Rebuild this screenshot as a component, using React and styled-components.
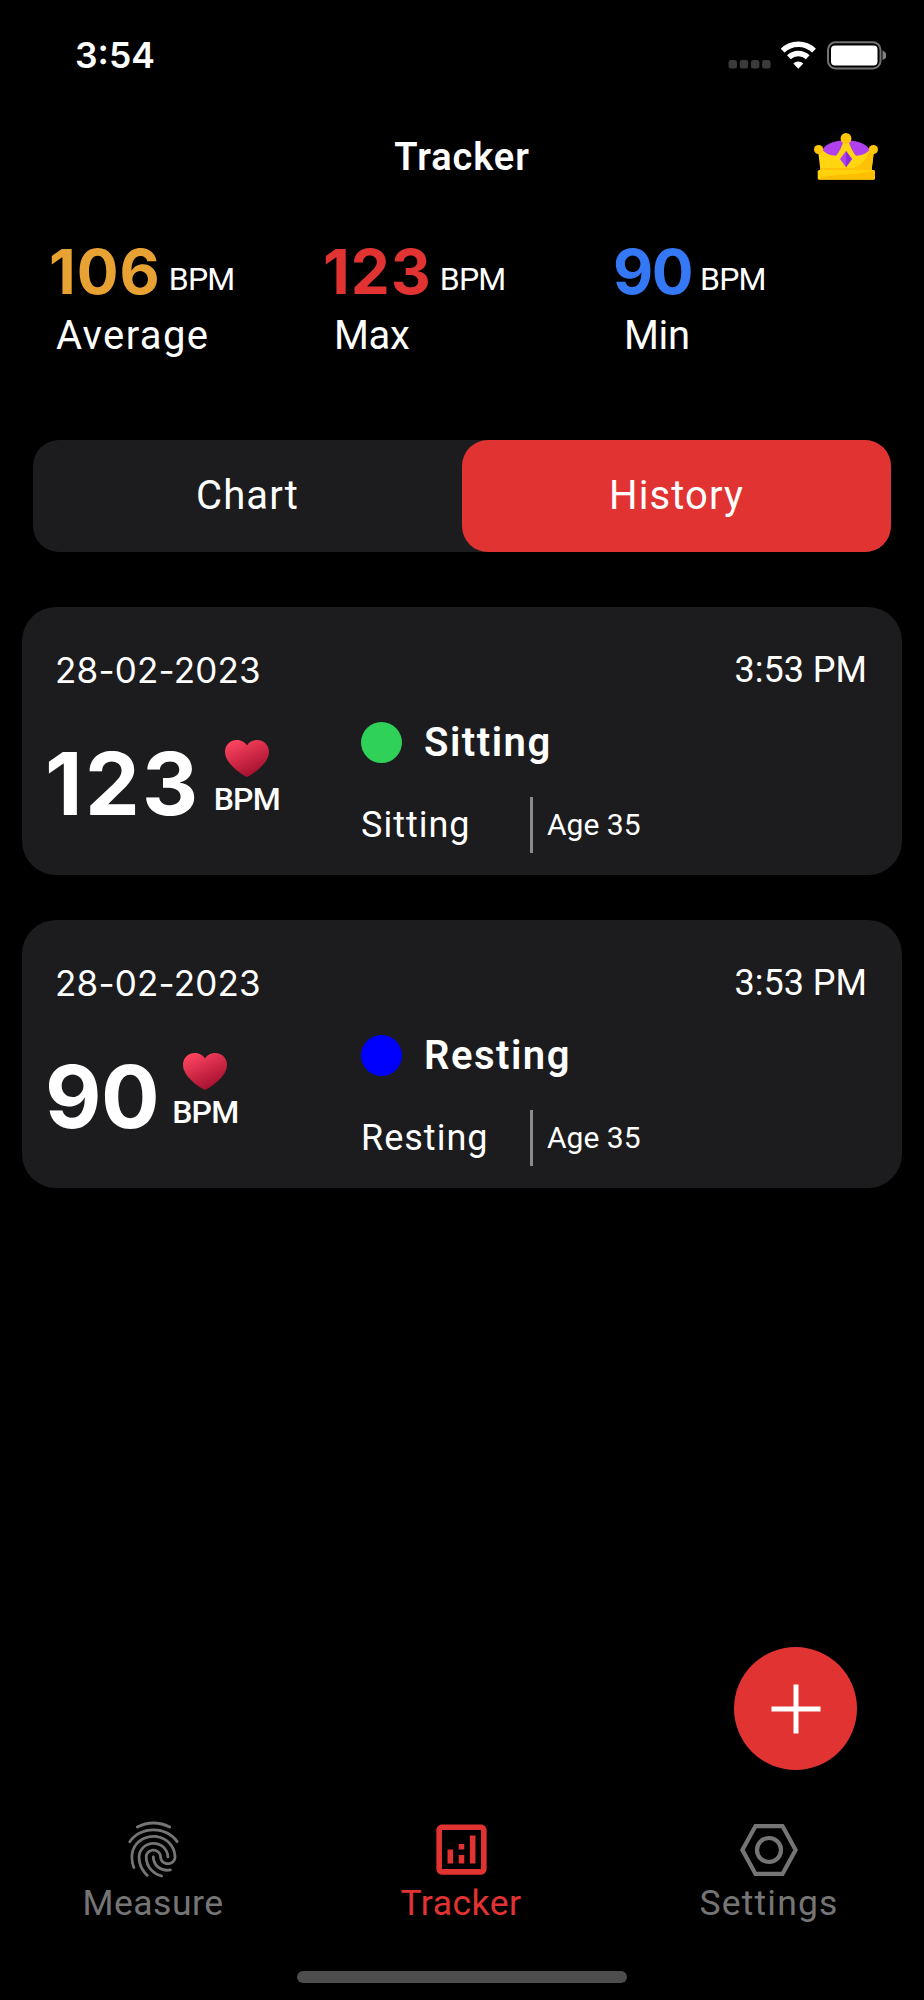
import React, { useState } from 'react'
import styled, { createGlobalStyle } from 'styled-components'
import { MdFingerprint, MdOutlineAnalytics } from 'react-icons/md'

const colors = {
    red: '#e23333',
    orange: '#e8a233',
    blue: '#3478f6',
    card: '#1c1c1e',
    muted: '#757575',
}

const GlobalStyle = createGlobalStyle`
    * {
        box-sizing: border-box;
    }
    body {
        margin: 0;
        background: #000;
        color: #fff;
        font-family: Roboto, 'Liberation Sans', sans-serif;
    }
    button {
        border: none;
        padding: 0;
        background: none;
        color: inherit;
        font-family: inherit;
        cursor: pointer;
    }
`
const Screen = styled.div`
    position: relative;
    display: flex;
    flex-direction: column;
    width: 924px;
    height: 2000px;
    overflow: hidden;
`
const Text = styled.span`
    display: block;
    font-size: ${p => p.$size}px;
    font-weight: ${p => p.$weight || 400};
    letter-spacing: ${p => p.$track || 0}px;
    line-height: ${p => p.$line || 48}px;
    color: ${p => p.$color || 'inherit'};
    white-space: nowrap;
`
// numerals with wide round shapes
const Digits = styled(Text)`
    font-family: Inter, sans-serif;
`
const StatusBar = styled.div`
    display: flex;
    align-items: center;
    justify-content: space-between;
    height: 111px;
    padding: 0 38px 0 75px;
`
const Header = styled.header`
    display: grid;
    grid-template-columns: 1fr auto 1fr;
    align-items: center;
    height: 91px;
    padding: 0 46px;
`
const CrownButton = styled.button`
    grid-column: 3;
    justify-self: end;
    height: 47px;
`
const Title = styled(Text)`
    grid-column: 2;
`
const Stats = styled.section`
    display: grid;
    grid-template-columns: 274px 290px 1fr;
    margin-top: 37px;
    padding-left: 49px;
`
const StatValue = styled.div`
    display: flex;
    gap: 8px;
    height: 66px;
`
const StatUnit = styled(Text)`
    padding-top: 15px;
`
const StatLabel = styled(Text)`
    margin-top: 7px;
    padding-left: ${p => p.$indent}px;
`
const Tabs = styled.div`
    display: grid;
    grid-template-columns: 1fr 1fr;
    height: 112px;
    margin: 80px 33px 0;
    border-radius: 26px;
    background: ${colors.card};
`
const Tab = styled.button`
    border-radius: 26px;
    background: ${p => (p.$active ? colors.red : 'transparent')};
`
const List = styled.main`
    display: flex;
    flex-direction: column;
    gap: 45px;
    margin-top: 55px;
    padding: 0 22px;
`
const Card = styled.article`
    height: 268px;
    padding-top: 39px;
    border-radius: 34px;
    background: ${colors.card};
`
const CardTop = styled.div`
    display: flex;
    justify-content: space-between;
    padding: 0 35px 0 33px;
`
const CardBody = styled.div`
    display: grid;
    grid-template-columns: 315px 1fr;
    padding-left: 23px;
`
const Reading = styled.div`
    display: flex;
    gap: 13px;
    padding-top: 45px;
`
const Unit = styled.div`
    display: flex;
    flex-direction: column;
    align-items: center;
    padding-top: 1px;
`
const Details = styled.div`
    padding: 24px 0 0 1px;
`
const Status = styled.div`
    display: flex;
    align-items: center;
    gap: 22px;
    margin-top: -1px;
`
const Dot = styled.i`
    width: 41px;
    height: 41px;
    border-radius: 50%;
    background: ${p => p.$color};
`
const StatusName = styled(Text)`
    padding-top: 2px;
`
const Meta = styled.div`
    display: grid;
    grid-template-columns: 169px 1fr;
    align-items: center;
    height: 56px;
    margin-top: 30px;
`
const Age = styled.div`
    display: flex;
    align-items: center;
    height: 56px;
    padding-left: 14px;
    border-left: 3px solid #8a8a8b;
`
const AddButton = styled.button`
    position: absolute;
    right: 67px;
    bottom: 230px;
    display: flex;
    align-items: center;
    justify-content: center;
    width: 123px;
    height: 123px;
    border-radius: 50%;
    background: ${colors.red};
`
const TabBar = styled.nav`
    display: grid;
    grid-template-columns: repeat(3, 308px);
    margin: auto 0 0 -1px;
`
const TabItem = styled.button`
    display: flex;
    flex-direction: column;
    align-items: center;
    color: ${p => (p.$active ? colors.red : colors.muted)};
`
const TabIcon = styled.span`
    display: flex;
    align-items: center;
    height: 67px;
    margin-bottom: -4px;
`
const HomeIndicator = styled.div`
    width: 330px;
    height: 12px;
    margin: 44px auto 17px;
    border-radius: 6px;
    background: #4d4d4d;
`

function StatusIcons() {
    return (
        <svg width="160" height="30" viewBox="0 0 160 30">
            <g fill="#3a3a3a">
                <rect x="2.500" y="19" width="8.500" height="8.500" rx="2.500" />
                <rect x="13.700" y="19" width="8.500" height="8.500" rx="2.500" />
                <rect x="24.900" y="19" width="8.500" height="8.500" rx="2.500" />
                <rect x="36.100" y="19" width="8.500" height="8.500" rx="2.500" />
            </g>
            <g fill="none" stroke="#fff" strokeWidth="5.400">
                <path d="M56.600 9.600a22.500 22.500 0 0 1 31.400 0" />
                <path d="M62.900 16.200a13.600 13.600 0 0 1 18.800 0" />
            </g>
            <path d="M67.300 22.600a7.200 7.200 0 0 1 10 0l-5 5.200z" fill="#fff" />
            <rect x="102" y="1.300" width="52.500" height="26.200" rx="7.500" fill="none" stroke="#737373" strokeWidth="2" />
            <rect x="105" y="4.500" width="46.500" height="20" rx="4" fill="#fff" />
            <path d="M156.500 9.500q4 1.500 4 4.800t-4 4.800z" fill="#808080" />
        </svg>
    )
}

function Crown() {
    return (
        <svg width="64" height="47" viewBox="0 0 64 47">
            <path d="M8 17C13 10 20 7.500 32 7.500S51 10 56 17L46 30H18z" fill="#b140ef" />
            <path
                d="M4 17H8.500Q13 22.500 22 22.800Q27 17 29.500 8H34.500Q37 17 42 22.800Q51 22.500 55.500 17H60L57.500 38H6.500z"
                fill="#ffd60f"
            />
            <path d="M60 17L57.500 38H28Q50 35 54 20z" fill="#ffc107" />
            <path d="M6.500 35H57.500V38H6.500z" fill="#ffc107" />
            <rect x="3.700" y="37" width="57.300" height="9.700" rx="1.600" fill="#ffd20c" />
            <path d="M4 46Q10 42.500 30 41.500T61 37.500V45q0 1.500-1.600 1.500H5z" fill="#ffbf00" />
            <path d="M32 18l6 8-6 8.300L26 26z" fill="#b140ef" />
            <path d="M32 18l6 8-6 8.300z" fill="#8a2be2" />
            <g fill="#ffc60a">
                <circle cx="4.600" cy="16.500" r="4.600" />
                <circle cx="59.400" cy="16.500" r="4.600" />
                <circle cx="32" cy="5.400" r="5.400" />
            </g>
        </svg>
    )
}

function Heart({ id }) {
    return (
        <svg width="44" height="37" viewBox="0 0 45 37" preserveAspectRatio="none">
            <defs>
                <linearGradient id={id} x1="0.2" y1="0" x2="0.75" y2="1">
                    <stop offset="0" stopColor="#ff4560" />
                    <stop offset="1" stopColor="#9c0b2b" />
                </linearGradient>
            </defs>
            <path
                d="M22.500 37C18 35 0 24 0 12C0 5 5 0 12 0C17 0 21 2.500 22.500 5.500C24 2.500 28 0 33 0C40 0 45 5 45 12C45 24 27 35 22.500 37z"
                fill={`url(#${id})`}
            />
        </svg>
    )
}

function NutIcon() {
    return (
        <svg width="58" height="52" viewBox="0 0 58 52" fill="none" stroke="currentColor" strokeWidth="4.200">
            <path d="M15.500 2.100H42.500L55.600 26L42.500 49.900H15.500L2.400 26z" />
            <circle cx="29" cy="26" r="12" />
        </svg>
    )
}

const stats = [
    { value: '106', label: 'Average', color: colors.orange, indent: 7, track: 1, labelTrack: 1.4 },
    { value: '123', label: 'Max', color: colors.red, indent: 11, track: 1, labelTrack: -0.3 },
    { value: '90', label: 'Min', color: colors.blue, indent: 11, track: -1.5, labelTrack: -0.3 },
]

const records = [
    {
        date: '28-02-2023',
        time: '3:53 PM',
        bpm: '123',
        track: 2.4,
        state: 'Sitting',
        age: 35,
        color: '#30d158',
    },
    {
        date: '28-02-2023',
        time: '3:53 PM',
        bpm: '90',
        track: -0.5,
        state: 'Resting',
        age: 35,
        color: '#0000ff',
    },
]

function Record({ record, id }) {
    return (
        <Card>
            <CardTop>
                <Digits $size={35} $track={0.2}>
                    {record.date}
                </Digits>
                <Text $size={36}>{record.time}</Text>
            </CardTop>
            <CardBody>
                <Reading>
                    <Digits $size={87} $weight={700} $line={90} $track={record.track}>
                        {record.bpm}
                    </Digits>
                    <Unit>
                        <Heart id={id} />
                        <Text $size={32} $weight={500} $line={45} $track={-0.8}>
                            BPM
                        </Text>
                    </Unit>
                </Reading>
                <Details>
                    <Status>
                        <Dot $color={record.color} />
                        <StatusName $size={40} $weight={600} $track={1.5}>
                            {record.state}
                        </StatusName>
                    </Status>
                    <Meta>
                        <Text $size={36} $track={1}>
                            {record.state}
                        </Text>
                        <Age>
                            <Text $size={30}>Age {record.age}</Text>
                        </Age>
                    </Meta>
                </Details>
            </CardBody>
        </Card>
    )
}

export default function App() {
    const [tab, setTab] = useState('History')

    return (
        <>
            <GlobalStyle />
            <Screen>
                <StatusBar>
                    <Digits $size={35.5} $weight={600}>
                        3:54
                    </Digits>
                    <StatusIcons />
                </StatusBar>
                <Header>
                    <Title $size={38} $weight={600} $track={0.9}>
                        Tracker
                    </Title>
                    <CrownButton aria-label="Premium">
                        <Crown />
                    </CrownButton>
                </Header>
                <Stats>
                    {stats.map(stat => (
                        <div key={stat.label}>
                            <StatValue>
                                <Digits
                                    $size={62}
                                    $weight={700}
                                    $line={66}
                                    $color={stat.color}
                                    $track={stat.track}
                                >
                                    {stat.value}
                                </Digits>
                                <StatUnit $size={32} $line={50} $track={-0.8}>
                                    BPM
                                </StatUnit>
                            </StatValue>
                            <StatLabel $size={40} $indent={stat.indent} $track={stat.labelTrack}>
                                {stat.label}
                            </StatLabel>
                        </div>
                    ))}
                </Stats>
                <Tabs>
                    {['Chart', 'History'].map(name => (
                        <Tab key={name} $active={tab === name} onClick={() => setTab(name)}>
                            <Text $size={40} $track={1.1}>
                                {name}
                            </Text>
                        </Tab>
                    ))}
                </Tabs>
                <List>
                    {records.map((record, i) => (
                        <Record key={record.state} record={record} id={`heart-${i}`} />
                    ))}
                </List>
                <AddButton aria-label="Add">
                    <svg width="50" height="50" viewBox="0 0 50 50" stroke="#fff" strokeWidth="5">
                        <path d="M25 0.500V49.500M0.500 25H49.500" />
                    </svg>
                </AddButton>
                <TabBar>
                    <TabItem>
                        <TabIcon>
                            <MdFingerprint size={67} />
                        </TabIcon>
                        <Text $size={35.5} $track={0.5}>
                            Measure
                        </Text>
                    </TabItem>
                    <TabItem $active>
                        <TabIcon>
                            <MdOutlineAnalytics size={67} />
                        </TabIcon>
                        <Text $size={35.5} $track={0.5}>
                            Tracker
                        </Text>
                    </TabItem>
                    <TabItem>
                        <TabIcon>
                            <NutIcon />
                        </TabIcon>
                        <Text $size={35.5} $track={1.2}>
                            Settings
                        </Text>
                    </TabItem>
                </TabBar>
                <HomeIndicator />
            </Screen>
        </>
    )
}
